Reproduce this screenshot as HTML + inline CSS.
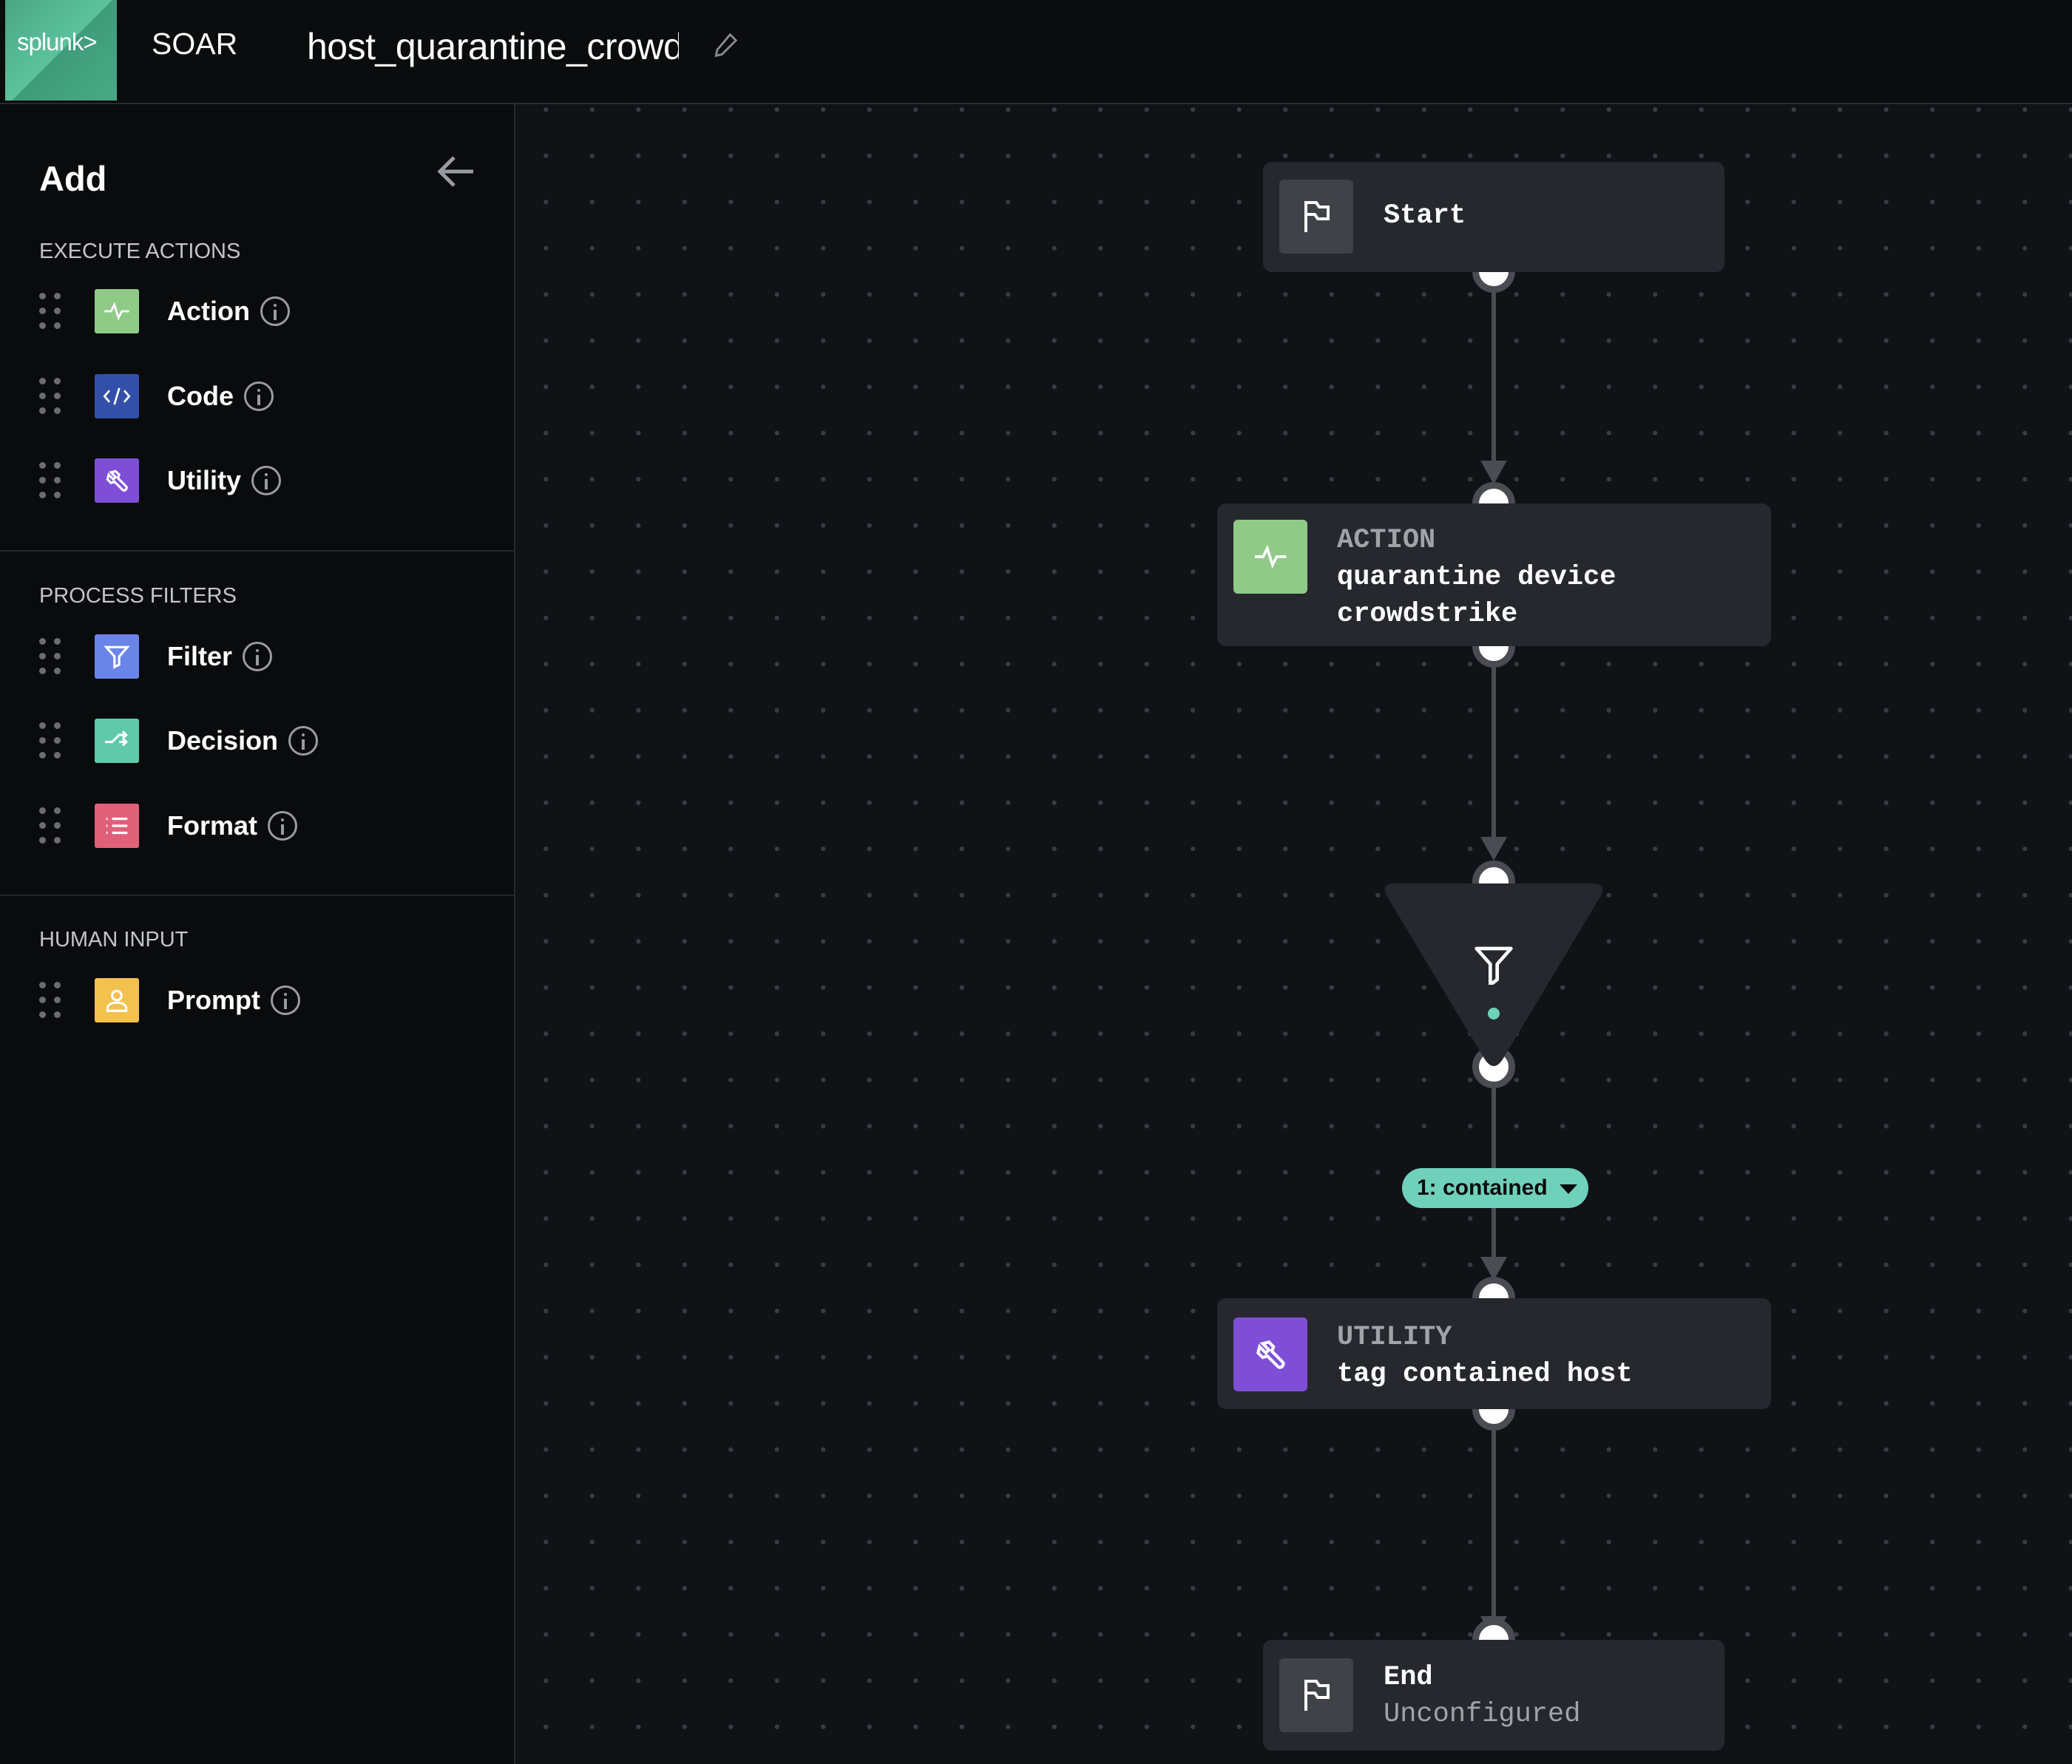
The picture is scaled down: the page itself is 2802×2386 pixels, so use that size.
<!DOCTYPE html>
<html><head><meta charset="utf-8">
<style>
*{margin:0;padding:0;box-sizing:border-box}
body{width:2802px;height:2386px;background:#111216;position:relative;overflow:hidden;font-family:"Liberation Sans",sans-serif;color:#fff}
.hdr{position:absolute;left:0;top:0;width:2802px;height:141px;background:#0b0c0e;border-bottom:2px solid #2a2b2f}
.logo{position:absolute;left:7px;top:0;width:151px;height:136px;background:linear-gradient(135deg,#4aa585 0%,#5cc29c 50%,#3f9c7b 51%,#47a986 100%);overflow:hidden}
.logo span{position:absolute;left:16px;top:38px;font-size:33px;color:#fff;letter-spacing:-1px}
.soar{position:absolute;left:205px;top:36px;font-size:41px;color:#fff}
.title{position:absolute;left:415px;top:34px;font-size:50px;color:#fff;width:503px;overflow:hidden;white-space:nowrap;letter-spacing:-0.5px}
.side{position:absolute;left:0;top:141px;width:697px;height:2245px;background:#0a0b0d;border-right:2px solid #2a2b2f}
.canvas{position:absolute;left:699px;top:141px;right:0;bottom:0;background-image:radial-gradient(circle,#393b40 2.8px,transparent 3.4px);background-size:62.5px 62.5px;background-position:8px -24px}
.sec{position:absolute;left:53px;font-size:29px;color:#c4c5c8}
.row{position:absolute;left:53px;height:60px;display:flex;align-items:center}
.grip{width:30px;height:50px;position:relative;margin-right:45px}
.grip i{position:absolute;width:9px;height:9px;border-radius:50%;background:#6b6d72}
.ic{width:60px;height:60px;border-radius:3px;display:flex;align-items:center;justify-content:center;margin-right:38px}
.lbl{font-size:36px;font-weight:bold;color:#fff}
.info{width:40px;height:40px;border:3px solid #9a9ba0;border-radius:50%;margin-left:14px;position:relative}
.info:before{content:"";position:absolute;left:15px;top:15px;width:4px;height:14px;background:#9a9ba0}
.info:after{content:"";position:absolute;left:15px;top:7px;width:4px;height:4px;background:#9a9ba0;border-radius:50%}
.div{position:absolute;left:0;width:697px;height:2px;background:#24252a}
.node{position:absolute;background:#27282d;border-radius:12px;font-family:"Liberation Mono",monospace;font-weight:bold;font-size:37px}
.nic{position:absolute;width:100px;height:100px;border-radius:6px;display:flex;align-items:center;justify-content:center}
.line{position:absolute;width:6px;background:#4b4c51;left:2017px}
.arr{position:absolute;left:2002px;width:0;height:0;border-left:18px solid transparent;border-right:18px solid transparent;border-top:32px solid #4b4c51}
.conn{position:absolute;left:1991px;width:58px;height:58px;border-radius:50%;background:#fff;border:9px solid #4b4c51}
</style></head><body>
<div class="hdr">
 <div class="logo"><span>splunk&gt;</span></div>
 <div class="soar">SOAR</div>
 <div class="title">host_quarantine_crowdstrike</div>
 <svg style="position:absolute;left:962px;top:42px" width="38" height="38" viewBox="0 0 24 24" fill="none" stroke="#8a8b90" stroke-width="1.8"><path d="M16 3l5 5L9 20l-5 1 1-5z"/></svg>
</div>
<div class="side">
 <div style="position:absolute;left:53px;top:73px;font-size:47px;font-weight:bold">Add</div>
 <svg style="position:absolute;left:590px;top:68px" width="52" height="46" viewBox="0 0 52 46" fill="none" stroke="#9a9ba0" stroke-width="5"><path d="M50 23H6M24 4L5 23l19 19"/></svg>
 <div class="sec" style="top:183px">EXECUTE ACTIONS</div>
 <div class="row" style="top:250px"><div class="grip"><i style="left:0;top:0"></i><i style="left:20px;top:0"></i><i style="left:0;top:20px"></i><i style="left:20px;top:20px"></i><i style="left:0;top:40px"></i><i style="left:20px;top:40px"></i></div><div class="ic" style="background:#8fcb87"><svg width="38" height="28" viewBox="0 0 34 24" fill="none" stroke="#fff" stroke-width="2.5"><path d="M2 12h8l4-8 5 16 4-8h9"/></svg></div><span class="lbl">Action</span><div class="info"></div></div>
 <div class="row" style="top:365px"><div class="grip"><i style="left:0;top:0"></i><i style="left:20px;top:0"></i><i style="left:0;top:20px"></i><i style="left:20px;top:20px"></i><i style="left:0;top:40px"></i><i style="left:20px;top:40px"></i></div><div class="ic" style="background:#3350a8"><svg width="40" height="30" viewBox="0 0 36 26" fill="none" stroke="#fff" stroke-width="2.5"><path d="M9 6l-6 7 6 7M27 6l6 7-6 7M21 3l-6 20"/></svg></div><span class="lbl">Code</span><div class="info"></div></div>
 <div class="row" style="top:479px"><div class="grip"><i style="left:0;top:0"></i><i style="left:20px;top:0"></i><i style="left:0;top:20px"></i><i style="left:20px;top:20px"></i><i style="left:0;top:40px"></i><i style="left:20px;top:40px"></i></div><div class="ic" style="background:#7e4fd6"><svg width="38" height="38" viewBox="0 0 24 24" fill="none" stroke="#fff" stroke-width="2"><path d="M14 7l-3-3-4 1 4 4-2 2-4-4-1 4 3 3 3-1 7 7c1 1 3 0 3-1 1-1 0-2-1-3l-6-6z"/></svg></div><span class="lbl">Utility</span><div class="info"></div></div>
 <div class="div" style="top:603px"></div>
 <div class="sec" style="top:649px">PROCESS FILTERS</div>
 <div class="row" style="top:717px"><div class="grip"><i style="left:0;top:0"></i><i style="left:20px;top:0"></i><i style="left:0;top:20px"></i><i style="left:20px;top:20px"></i><i style="left:0;top:40px"></i><i style="left:20px;top:40px"></i></div><div class="ic" style="background:#6b84e8"><svg width="38" height="38" viewBox="0 0 24 24" fill="none" stroke="#fff" stroke-width="2"><path d="M3 4h18l-7 8v7l-4 2v-9z"/></svg></div><span class="lbl">Filter</span><div class="info"></div></div>
 <div class="row" style="top:831px"><div class="grip"><i style="left:0;top:0"></i><i style="left:20px;top:0"></i><i style="left:0;top:20px"></i><i style="left:20px;top:20px"></i><i style="left:0;top:40px"></i><i style="left:20px;top:40px"></i></div><div class="ic" style="background:#5fc9a9"><svg width="38" height="38" viewBox="0 0 24 24" fill="none" stroke="#fff" stroke-width="2"><path d="M2 13h6l6-6h6M17 4l3 3-3 3M14 13l6 0M17 10l3 3-3 3"/></svg></div><span class="lbl">Decision</span><div class="info"></div></div>
 <div class="row" style="top:946px"><div class="grip"><i style="left:0;top:0"></i><i style="left:20px;top:0"></i><i style="left:0;top:20px"></i><i style="left:20px;top:20px"></i><i style="left:0;top:40px"></i><i style="left:20px;top:40px"></i></div><div class="ic" style="background:#e0607a"><svg width="38" height="38" viewBox="0 0 24 24" fill="none" stroke="#fff" stroke-width="2"><path d="M8 6h13M8 12h13M8 18h13M3 6h1M3 12h1M3 18h1"/></svg></div><span class="lbl">Format</span><div class="info"></div></div>
 <div class="div" style="top:1069px"></div>
 <div class="sec" style="top:1114px">HUMAN INPUT</div>
 <div class="row" style="top:1182px"><div class="grip"><i style="left:0;top:0"></i><i style="left:20px;top:0"></i><i style="left:0;top:20px"></i><i style="left:20px;top:20px"></i><i style="left:0;top:40px"></i><i style="left:20px;top:40px"></i></div><div class="ic" style="background:#f2c14e"><svg width="38" height="38" viewBox="0 0 24 24" fill="none" stroke="#fff" stroke-width="2"><circle cx="12" cy="8" r="4"/><path d="M4 21v-2c0-3 3-5 8-5s8 2 8 5v2z"/></svg></div><span class="lbl">Prompt</span><div class="info"></div></div>
</div>
<div class="canvas"></div>

<div class="line" style="top:396px;height:230px"></div><div class="arr" style="top:623px"></div>
<div class="line" style="top:900px;height:235px"></div><div class="arr" style="top:1132px"></div>
<div class="line" style="top:1470px;height:260px"></div><div class="arr" style="top:1700px"></div>
<div class="line" style="top:1935px;height:255px"></div><div class="arr" style="top:2186px"></div>

<div class="conn" style="top:338px"></div>
<div class="conn" style="top:652px"></div>
<div class="conn" style="top:845px"></div>
<div class="conn" style="top:1164px"></div>
<div class="conn" style="top:1414px"></div>
<div class="conn" style="top:1727px"></div>
<div class="conn" style="top:1877px"></div>
<div class="conn" style="top:2189px"></div>

<div class="node" style="left:1708px;top:219px;width:624px;height:149px">
 <div class="nic" style="left:22px;top:24px;background:#414247"><svg width="40" height="46" viewBox="0 0 20 23" fill="none" stroke="#fff" stroke-width="2"><path d="M3 22V2h7l2 3h6v8h-7l-2-3H3"/></svg></div>
 <div style="position:absolute;left:163px;top:52px">Start</div>
</div>
<div class="node" style="left:1646px;top:681px;width:749px;height:193px">
 <div class="nic" style="left:22px;top:22px;background:#8fcb87"><svg width="48" height="36" viewBox="0 0 34 24" fill="none" stroke="#fff" stroke-width="2.6"><path d="M2 12h8l4-8 5 16 4-8h9"/></svg></div>
 <div style="position:absolute;left:162px;top:25px;line-height:50px"><span style="color:#a2a3a7">ACTION</span><br>quarantine device<br>crowdstrike</div>
</div>
<svg style="position:absolute;left:1864px;top:1193px" width="312" height="260" viewBox="0 0 312 260"><path d="M22 2H290Q310 2 300 20L168 240Q156 258 144 240L12 20Q2 2 22 2Z" fill="#27282d"/></svg>
<svg style="position:absolute;left:1992px;top:1276px" width="56" height="56" viewBox="0 0 24 24" fill="none" stroke="#fff" stroke-width="2" stroke-linejoin="round"><path d="M2 3h20l-8 9v9l-4 3V12z"/></svg>
<div style="position:absolute;left:2012px;top:1363px;width:16px;height:16px;border-radius:50%;background:#6fd1b9"></div>
<div style="position:absolute;left:1896px;top:1580px;width:252px;height:54px;border-radius:27px;background:#6fd1b9;color:#0a0b0d;font-size:30px;font-weight:bold;line-height:54px;padding-left:20px">1: contained <span style="display:inline-block;width:0;height:0;border-left:12px solid transparent;border-right:12px solid transparent;border-top:13px solid #0a0b0d;margin-left:8px;vertical-align:middle"></span></div>
<div class="node" style="left:1646px;top:1756px;width:749px;height:150px">
 <div class="nic" style="left:22px;top:26px;background:#7e4fd6"><svg width="50" height="50" viewBox="0 0 24 24" fill="none" stroke="#fff" stroke-width="2"><path d="M14 7l-3-3-4 1 4 4-2 2-4-4-1 4 3 3 3-1 7 7c1 1 3 0 3-1 1-1 0-2-1-3l-6-6z"/></svg></div>
 <div style="position:absolute;left:162px;top:28px;line-height:50px"><span style="color:#a2a3a7">UTILITY</span><br>tag contained host</div>
</div>
<div class="node" style="left:1708px;top:2218px;width:624px;height:150px">
 <div class="nic" style="left:22px;top:25px;background:#414247"><svg width="40" height="46" viewBox="0 0 20 23" fill="none" stroke="#fff" stroke-width="2"><path d="M3 22V2h7l2 3h6v8h-7l-2-3H3"/></svg></div>
 <div style="position:absolute;left:163px;top:26px;line-height:50px">End<br><span style="font-weight:normal;color:#a2a3a7">Unconfigured</span></div>
</div>
</body></html>
